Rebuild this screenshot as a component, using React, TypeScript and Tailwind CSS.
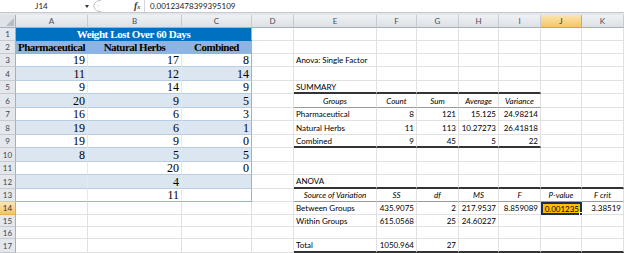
import React from 'react';

const COLS = ['A', 'B', 'C', 'D', 'E', 'F', 'G', 'H', 'I', 'J', 'K'];

// weight lost table, columns A..C
const LEFT: Record<number, string[]> = {
  3: ['19', '17', '8'],
  4: ['11', '12', '14'],
  5: ['9', '14', '9'],
  6: ['20', '9', '5'],
  7: ['16', '6', '3'],
  8: ['19', '6', '1'],
  9: ['19', '9', '0'],
  10: ['8', '5', '5'],
  11: ['', '20', '0'],
  12: ['', '4', ''],
  13: ['', '11', ''],
};

// anova output, columns E..K
const RIGHT: Record<number, string[]> = {
  3: ['Anova: Single Factor'],
  5: ['SUMMARY'],
  6: ['Groups', 'Count', 'Sum', 'Average', 'Variance'],
  7: ['Pharmaceutical', '8', '121', '15.125', '24.98214'],
  8: ['Natural Herbs', '11', '113', '10.27273', '26.41818'],
  9: ['Combined', '9', '45', '5', '22'],
  12: ['ANOVA'],
  13: ['Source of Variation', 'SS', 'df', 'MS', 'F', 'P-value', 'F crit'],
  14: ['Between Groups', '435.9075', '2', '217.9537', '8.859089', '0.001235', '3.38519'],
  15: ['Within Groups', '615.0568', '25', '24.60227'],
  17: ['Total', '1050.964', '27'],
};

const FormulaBar: React.FC = () => (
  <div className="flex h-[12px] items-center bg-white text-[8px] leading-none text-[#222]">
    <div className="flex h-full w-[90px] items-center">
      <span className="flex-1 pl-[35px]">J14</span>
      <span className="mr-[1px] h-0 w-0 border-x-[2.5px] border-t-[3px] border-x-transparent border-t-[#333]" />
    </div>
    <svg width="10" height="12" viewBox="0 0 10 12" className="ml-[3px]">
      <path d="M8 0.5 C3 0.5 1 3 1 6 C1 9 3 11.5 8 11.5" fill="none" stroke="#b9bec5" strokeWidth="1" />
      <circle cx="5" cy="6" r="0.7" fill="#c9cdd2" />
    </svg>
    <div className="w-[31px]" />
    <span className="w-[10px] font-['Liberation_Serif',serif] text-[10px] font-bold italic text-[#3a3a3a]">
      f<span className="text-[6px]">x</span>
    </span>
    <div className="h-full w-px bg-[#d3d6db]" />
    <span className="pl-[5px]">0.00123478399395109</span>
  </div>
);

function leftCell(r: number, c: number) {
  if (r === 1) {
    if (c > 0) return null;
    return (
      <div key={`${r}-${c}`} className="col-span-3 flex items-center justify-center border-r border-b border-r-[#95b3d7] border-b-[#0070c0] bg-[#0070c0] font-['Liberation_Serif',serif] text-[11px] font-bold tracking-[-0.4px] text-white">
        Weight Lost Over 60 Days
      </div>
    );
  }
  if (r === 2) {
    const label = ['Pharmaceutical', 'Natural Herbs', 'Combined'][c];
    return (
      <div key={`${r}-${c}`} className={`flex items-center justify-center overflow-visible whitespace-nowrap border-b border-r border-b-[#8db4e2] bg-[#8db4e2] font-['Liberation_Serif',serif] text-[11px] font-bold tracking-[-0.5px] text-black ${c === 2 ? 'border-r-[#95b3d7]' : 'border-r-[#8db4e2]'}`}>
        {label}
      </div>
    );
  }
  if (r <= 13) {
    const band = r % 2 === 0 ? 'bg-[#dce6f1]' : 'bg-white';
    const right = c === 2 ? 'border-r-[#95b3d7]' : 'border-r-[#e3e9f2]';
    const bottom = r === 13 ? 'border-b-[#95b3d7]' : 'border-b-[#b8cce4]';
    return (
      <div key={`${r}-${c}`} className={`flex items-center justify-end border-r border-b pr-[2px] font-['Liberation_Serif',serif] text-[12px] leading-none text-black ${band} ${right} ${bottom}`}>
        {LEFT[r][c]}
      </div>
    );
  }
  return <div key={`${r}-${c}`} className="border-r border-b border-r-[#e1e1e1] border-b-[#e1e1e1]" />;
}

function rightCell(r: number, c: number) {
  const row = RIGHT[r];
  const v = row ? row[c - 4] : undefined;
  const header = r === 6 || r === 13;

  if (r === 14 && c === 9) {
    return (
      <div key={`${r}-${c}`} className="relative flex items-center justify-end border-2 border-[#1c2f52] bg-[#ffc000] pr-[1px]">
        {v}
        <span className="absolute -right-[3px] -bottom-[3px] h-[4px] w-[4px] border border-white bg-[#1c2f52]" />
      </div>
    );
  }

  let bottom = 'border-b border-b-[#e1e1e1]';
  if (((r === 5 || r === 9) && c <= 8) || r === 12 || r === 17) bottom = 'border-b-2 border-b-[#333333]';
  else if ((r === 6 && c <= 8) || r === 13) bottom = 'border-b border-b-[#9a9a9a]';

  const align = header ? 'justify-center italic' : c === 4 ? 'justify-start' : 'justify-end';

  return (
    <div key={`${r}-${c}`} className={`flex items-center overflow-visible whitespace-nowrap border-r border-r-[#e1e1e1] px-[2px] ${bottom} ${align}`}>
      {v}
    </div>
  );
}

const Sheet: React.FC = () => {
  const rows = Array.from({ length: 17 }, (_, i) => i + 1);
  return (
    <div className="grid grid-cols-[16px_72px_94px_70px_42px_83px_40px_42px_40px_42px_41px_42px] grid-rows-[13px_13px_13px_13px_14px_13px_14px_13px_14px_13px_14px_13px_14px_13px_13px_12px_12px_14px] text-[8px] leading-none">
      {/* corner */}
      <div className="flex items-end justify-end border-r border-b border-r-[#a5b0bd] border-b-[#a5b0bd] bg-[#dfe3e8] p-[1px]">
        <svg width="8" height="8" viewBox="0 0 8 8">
          <polygon points="8,0 8,8 0,8" fill="#b4bcc6" />
        </svg>
      </div>
      {COLS.map(l =>
        l === 'J' ? (
          <div key={l} className="flex items-center justify-center border-r border-b border-r-[#e2a84c] border-b-[#e89b2f] bg-linear-to-b from-[#fbe5b2] to-[#f3c660] text-[8px] text-[#333]">
            {l}
          </div>
        ) : (
          <div key={l} className="flex items-center justify-center border-r border-b border-r-[#c6cbd2] border-b-[#a5b0bd] bg-linear-to-b from-[#eff1f4] to-[#dde1e6] text-[8px] text-[#4a4f57]">
            {l}
          </div>
        )
      )}
      {rows.map(r => (
        <React.Fragment key={r}>
          {r === 14 ? (
            <div className="flex items-center justify-center border-r border-b border-r-[#e2a84c] border-b-[#e8b25a] bg-linear-to-b from-[#fbe5b2] to-[#f3c660] text-[8px] text-[#333]">
              {r}
            </div>
          ) : (
            <div className="flex items-center justify-center border-r border-b border-r-[#a5b0bd] border-b-[#c6cbd2] bg-[#e4e8ed] text-[8px] text-[#3d4652]">
              {r}
            </div>
          )}
          {[0, 1, 2].map(c => leftCell(r, c))}
          <div className="border-r border-b border-r-[#e1e1e1] border-b-[#e1e1e1]" />
          {[4, 5, 6, 7, 8, 9, 10].map(c => rightCell(r, c))}
        </React.Fragment>
      ))}
    </div>
  );
};

export default function App() {
  return (
    <div className="h-[253px] w-[624px] overflow-hidden bg-white font-['Lato',sans-serif] text-black">
      <FormulaBar />
      <div className="h-[3px] border-t border-[#c4c9d0] bg-[#e3e6ea]" />
      <Sheet />
    </div>
  );
}
